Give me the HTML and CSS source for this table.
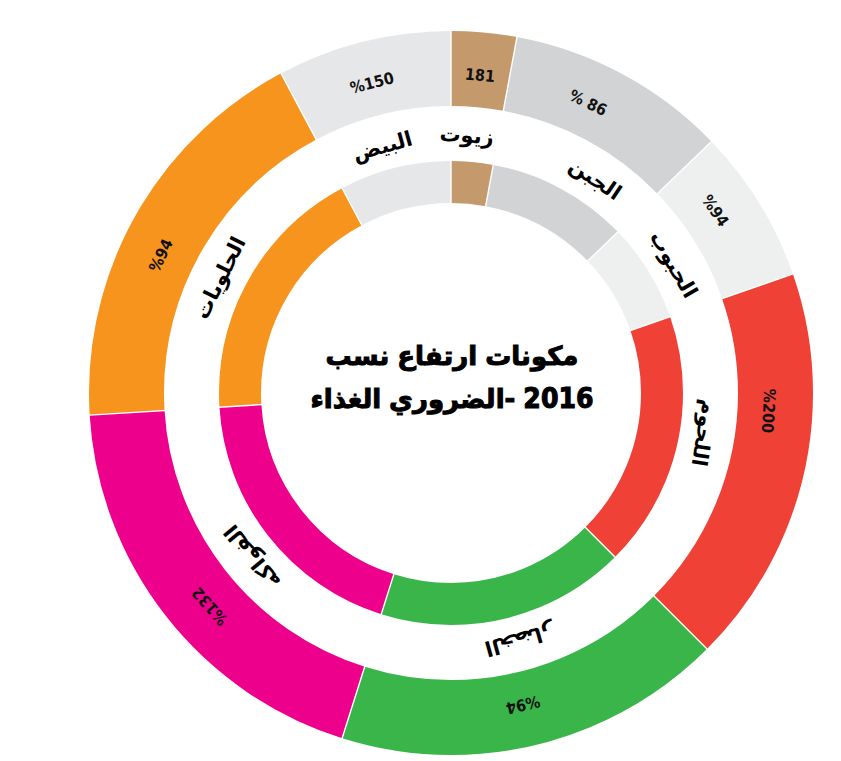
FILE: index.html
```html
<!DOCTYPE html>
<html lang="ar">
<head>
<meta charset="utf-8">
<title>نسب ارتفاع مكونات الغذاء الضروري - 2016</title>
<link rel="stylesheet" href="styles.css">
</head>
<body>
<main class="chart">
  <svg class="donut" width="841" height="761" viewBox="0 0 841 761" xmlns="http://www.w3.org/2000/svg">
    <g class="ring outer" transform="rotate(-90 451 393)">
      <circle class="seg c-oil" cx="451" cy="393" r="324.5" pathLength="360" stroke-dasharray="10.5 360" stroke-dashoffset="0"/>
      <circle class="seg c-cheese" cx="451" cy="393" r="324.5" pathLength="360" stroke-dasharray="35.5 360" stroke-dashoffset="-10.5"/>
      <circle class="seg c-grain" cx="451" cy="393" r="324.5" pathLength="360" stroke-dasharray="24.8 360" stroke-dashoffset="-46"/>
      <circle class="seg c-meat" cx="451" cy="393" r="324.5" pathLength="360" stroke-dasharray="64.2 360" stroke-dashoffset="-70.8"/>
      <circle class="seg c-veg" cx="451" cy="393" r="324.5" pathLength="360" stroke-dasharray="62.5 360" stroke-dashoffset="-135"/>
      <circle class="seg c-fruit" cx="451" cy="393" r="324.5" pathLength="360" stroke-dasharray="69 360" stroke-dashoffset="-197.5"/>
      <circle class="seg c-sweet" cx="451" cy="393" r="324.5" pathLength="360" stroke-dasharray="65.5 360" stroke-dashoffset="-266.5"/>
      <circle class="seg c-egg" cx="451" cy="393" r="324.5" pathLength="360" stroke-dasharray="28 360" stroke-dashoffset="-332"/>
    </g>
    <g class="ring inner" transform="rotate(-90 451 393)">
      <circle class="seg c-oil" cx="451" cy="393" r="211" pathLength="360" stroke-dasharray="10.5 360" stroke-dashoffset="0"/>
      <circle class="seg c-cheese" cx="451" cy="393" r="211" pathLength="360" stroke-dasharray="35.5 360" stroke-dashoffset="-10.5"/>
      <circle class="seg c-grain" cx="451" cy="393" r="211" pathLength="360" stroke-dasharray="24.8 360" stroke-dashoffset="-46"/>
      <circle class="seg c-meat" cx="451" cy="393" r="211" pathLength="360" stroke-dasharray="64.2 360" stroke-dashoffset="-70.8"/>
      <circle class="seg c-veg" cx="451" cy="393" r="211" pathLength="360" stroke-dasharray="62.5 360" stroke-dashoffset="-135"/>
      <circle class="seg c-fruit" cx="451" cy="393" r="211" pathLength="360" stroke-dasharray="69 360" stroke-dashoffset="-197.5"/>
      <circle class="seg c-sweet" cx="451" cy="393" r="211" pathLength="360" stroke-dasharray="65.5 360" stroke-dashoffset="-266.5"/>
      <circle class="seg c-egg" cx="451" cy="393" r="211" pathLength="360" stroke-dasharray="28 360" stroke-dashoffset="-332"/>
    </g>
    <g class="seps">
      <line x1="451" y1="27" x2="451" y2="207" transform="rotate(0 451 393)"/>
      <line x1="451" y1="27" x2="451" y2="207" transform="rotate(10.5 451 393)"/>
      <line x1="451" y1="27" x2="451" y2="207" transform="rotate(46 451 393)"/>
      <line x1="451" y1="27" x2="451" y2="207" transform="rotate(70.8 451 393)"/>
      <line x1="451" y1="27" x2="451" y2="207" transform="rotate(135 451 393)"/>
      <line x1="451" y1="27" x2="451" y2="207" transform="rotate(197.5 451 393)"/>
      <line x1="451" y1="27" x2="451" y2="207" transform="rotate(266.5 451 393)"/>
      <line x1="451" y1="27" x2="451" y2="207" transform="rotate(332 451 393)"/>
    </g>
    <g class="values">
      <text x="451" y="74" transform="rotate(5.2 451 393)">181</text>
      <text x="451" y="73" transform="rotate(345.7 451 393)">%150</text>
      <text x="451" y="72" transform="rotate(25.3 451 393)">% 86</text>
      <text x="451" y="72" transform="rotate(55.4 451 393)">%94</text>
      <text x="451" y="75" transform="rotate(93.2 451 393)">%200</text>
      <text x="451" y="73" transform="rotate(167 451 393)">%94</text>
      <text x="451" y="71" transform="rotate(228.5 451 393)">%132</text>
      <text x="451" y="72" transform="rotate(295.4 451 393)">%94</text>
    </g>
    <g class="labels">
      <text x="451" y="135" transform="rotate(3.5 451 393)">زيوت</text>
      <text x="451" y="137" transform="rotate(344.5 451 393)">البيض</text>
      <text x="451" y="135" transform="rotate(34 451 393)">الجبن</text>
      <text x="451" y="136" transform="rotate(60 451 393)">الحبوب</text>
      <text x="451" y="137" transform="rotate(99 451 393)">اللحوم</text>
      <text x="451" y="137" transform="rotate(164.5 451 393)">الخضار</text>
      <text x="451" y="136" transform="rotate(230.5 451 393)">الفواكه</text>
      <text x="451" y="135" transform="rotate(296.5 451 393)">الحلويات</text>
    </g>
  </svg>
  <h1 class="title">
    <span class="title-line"><span>نسب</span><span>ارتفاع</span><span>مكونات</span></span>
    <span class="title-line"><span>الغذاء</span><span>الضروري-</span><span class="year">2016</span></span>
  </h1>
</main>
</body>
</html>
```

FILE: styles.css
```css
html, body {
  margin: 0;
  padding: 0;
  background: #ffffff;
}

.chart {
  position: relative;
  width: 841px;
  height: 761px;
  overflow: hidden;
}

.donut {
  display: block;
}

.seg {
  fill: none;
}

.outer .seg {
  stroke-width: 75;
}

.inner .seg {
  stroke-width: 42;
}

.c-oil { stroke: #c49a6c; }
.c-cheese { stroke: #d1d3d4; }
.c-grain { stroke: #eef0ef; }
.c-meat { stroke: #ef4136; }
.c-veg { stroke: #39b54a; }
.c-fruit { stroke: #ec008c; }
.c-sweet { stroke: #f7941d; }
.c-egg { stroke: #e6e7e8; }

.seps line {
  stroke: #ffffff;
  stroke-width: 1.4;
}

.values text {
  font-family: "DejaVu Sans Condensed", "DejaVu Sans", sans-serif;
  font-weight: 700;
  font-size: 16px;
  fill: #111111;
  text-anchor: middle;
  dominant-baseline: central;
}

.labels text {
  font-family: "DejaVu Sans", sans-serif;
  font-weight: 700;
  font-size: 21px;
  fill: #000000;
  text-anchor: middle;
  dominant-baseline: central;
}

.title {
  position: absolute;
  left: 452px;
  top: 377px;
  transform: translate(-50%, -50%);
  margin: 0;
  display: flex;
  flex-direction: column;
  align-items: center;
  gap: 5px;
  font-family: "DejaVu Sans", sans-serif;
  font-weight: 700;
  font-size: 26px;
  line-height: 38px;
  color: #000000;
  -webkit-text-stroke: 1px #000000;
  white-space: nowrap;
  direction: ltr;
}

.title-line {
  display: flex;
  flex-direction: row;
  gap: 8px;
}

.year {
  font-family: "DejaVu Sans Condensed", "DejaVu Sans", sans-serif;
  font-size: 28px;
}
```
